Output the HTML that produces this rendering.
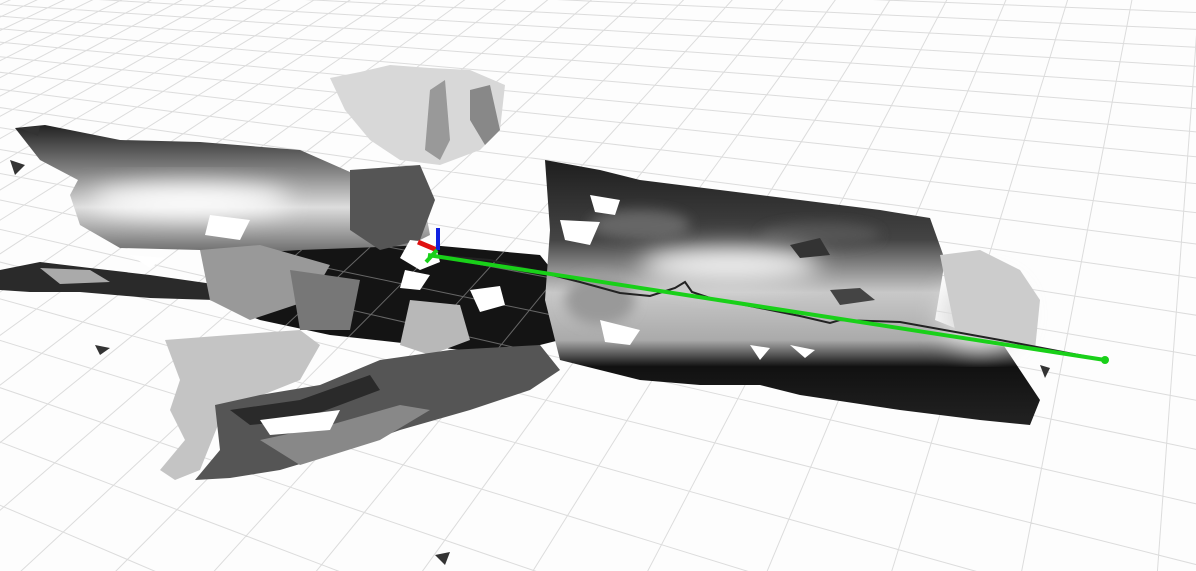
<!DOCTYPE html>
<html><head><meta charset="utf-8"><style>
html,body{margin:0;padding:0;background:#fff;width:1196px;height:571px;overflow:hidden}
svg{display:block}
</style></head><body>
<svg id="s" width="1196" height="571" viewBox="0 0 1196 571" xmlns="http://www.w3.org/2000/svg">
<defs>
<filter id="b"><feGaussianBlur stdDeviation="12"/></filter>
<filter id="b2"><feGaussianBlur stdDeviation="6"/></filter>
<linearGradient id="lu" x1="0" y1="0" x2="0" y2="1">
<stop offset="0" stop-color="#222"/><stop offset="0.35" stop-color="#888"/><stop offset="0.6" stop-color="#ddd"/><stop offset="1" stop-color="#555"/>
</linearGradient>
<linearGradient id="rt" x1="0" y1="0" x2="0" y2="1">
<stop offset="0" stop-color="#1e1e1e"/><stop offset="0.3" stop-color="#444"/><stop offset="0.5" stop-color="#c8c8c8"/><stop offset="0.68" stop-color="#aaa"/><stop offset="0.78" stop-color="#111"/><stop offset="1" stop-color="#222"/>
</linearGradient>
<clipPath id="mc"><polygon points="220,255 300,250 430,245 540,255 560,280 560,340 500,355 420,345 330,335 260,320 210,300"/></clipPath>
<clipPath id="vc"><rect x="0" y="0" width="1196" height="571"/></clipPath>
</defs>
<rect width="1196" height="571" fill="#fdfdfd"/>
<g id="grid" clip-path="url(#vc)" stroke="#dcdcdc" stroke-width="1" fill="none"></g>

<polygon fill="url(#lu)" points="15,128 45,125 120,140 200,142 300,150 350,172 420,180 430,235 400,250 340,262 260,255 200,250 120,248 80,225 70,195 78,180 40,160"/>
<polygon fill="#2a2a2a" points="0,270 40,262 90,268 150,275 220,285 215,300 150,298 80,292 30,292 0,290"/>
<polygon fill="#aaa" points="40,268 90,270 110,282 60,284"/>
<polygon fill="#141414" points="220,255 300,250 430,245 540,255 560,280 560,340 500,355 420,345 330,335 260,320 210,300"/>
<g id="grid2" clip-path="url(#mc)" stroke="#666" stroke-width="1" fill="none"></g>
<polygon fill="#999" points="200,250 260,245 330,265 310,300 250,320 210,300"/>
<polygon fill="#777" points="290,270 360,280 350,330 300,330"/>
<polygon fill="#555" points="350,170 420,165 435,200 420,240 380,250 350,230"/>
<polygon fill="#b8b8b8" points="410,300 460,305 470,340 430,355 400,345"/>
<polygon fill="#c4c4c4" points="165,340 230,335 300,330 320,345 300,380 250,400 220,420 200,470 175,480 160,470 185,440 170,410 180,380"/>
<polygon fill="#555" points="215,405 260,395 320,385 380,360 450,350 540,345 560,370 530,390 470,410 400,430 330,455 280,470 230,478 195,480 220,450"/>
<polygon fill="#2a2a2a" points="230,410 300,400 370,375 380,390 300,420 250,425"/>
<polygon fill="#888" points="260,440 330,425 400,405 430,410 380,440 300,465"/>
<polygon fill="#fff" points="260,420 340,410 330,430 270,435"/>
<polygon fill="url(#rt)" points="545,160 600,170 640,180 720,190 800,200 880,210 930,218 945,260 935,320 960,330 1000,340 1040,400 1030,425 980,420 900,410 800,395 760,385 700,385 640,380 600,370 560,360 545,300 550,230"/>
<g filter="url(#b2)">
<ellipse cx="640" cy="225" rx="50" ry="15" fill="#666"/>
<ellipse cx="820" cy="235" rx="60" ry="12" fill="#555"/>
<ellipse cx="600" cy="300" rx="35" ry="25" fill="#999"/>
</g>
<g filter="url(#b)" fill="#f0f0f0">
<ellipse cx="730" cy="265" rx="90" ry="18"/>
<ellipse cx="190" cy="200" rx="100" ry="16" fill="#fff"/>
<ellipse cx="980" cy="315" rx="40" ry="35" fill="#ddd"/>
</g>
<polygon fill="#ccc" points="940,255 980,250 1020,270 1040,300 1035,350 990,345 955,330"/>
<polygon fill="#333" points="790,245 820,238 830,255 800,258"/>
<polygon fill="#444" points="830,290 860,288 875,300 840,305"/>
<polygon fill="#d8d8d8" points="330,78 360,72 390,65 430,68 470,70 505,85 500,130 480,150 440,165 400,160 370,140 345,110"/>
<polygon fill="#999" points="430,90 445,80 450,140 440,160 425,150"/>
<polygon fill="#888" points="470,90 490,85 500,130 485,145 470,120"/>
<g fill="#fff">
<polygon points="410,240 435,243 440,262 420,270 400,258"/>
<polygon points="405,270 430,275 420,290 400,288"/>
<polygon points="470,290 500,286 505,305 480,312"/>
<polygon points="560,220 600,222 590,245 565,240"/>
<polygon points="590,195 620,200 615,215 595,212"/>
<polygon points="600,320 640,330 630,345 605,342"/>
<polygon points="750,345 770,348 760,360"/>
<polygon points="790,345 815,350 805,358"/>
<polygon points="210,215 250,220 240,240 205,235"/>
<polygon points="130,255 165,258 150,268"/>
</g>
<g fill="#333">
<polygon points="95,345 110,348 100,355"/>
<polygon points="435,555 450,552 445,565"/>
<polygon points="10,160 25,165 15,175"/>
<polygon points="1040,365 1050,368 1045,378"/>
<polygon points="20,128 40,126 38,136"/>
</g>
<path d="M430,255 L490,260 540,272 580,282 620,293 650,296 675,288 685,282 692,292 710,298 760,308 800,316 830,323 840,320 900,322 1000,340 1105,360" stroke="#222" stroke-width="2" fill="none"/>
<line x1="428" y1="255" x2="1105" y2="360" stroke="#19d019" stroke-width="4"/>
<circle cx="1105" cy="360" r="4" fill="#19d019"/>
<line x1="437" y1="250" x2="418" y2="242" stroke="#e01010" stroke-width="5"/>
<line x1="438" y1="250" x2="438" y2="228" stroke="#1020e0" stroke-width="4"/>
<line x1="437" y1="250" x2="426" y2="262" stroke="#19d019" stroke-width="4"/>
</svg>
<script>
(function(){
var V1=[-1400,-92],V2=[1240,-560],O=[430,255],a=0.032,b=0.034;
function P(u,v){var d=a*u+b*v+1;if(d<0.03)return null;var x=(a*u*V1[0]+b*v*V2[0]+O[0])/d,y=(a*u*V1[1]+b*v*V2[1]+O[1])/d;return [x,y];}
var d='';
function line(f){var s='',st=false;for(var t=-200;t<=200;t+=1){var p=f(t);if(!p||p[0]<-300||p[0]>1500||p[1]<-300||p[1]>900){st=false;continue;}s+=(st?'L':'M')+p[0].toFixed(1)+' '+p[1].toFixed(1);st=true;}return s;}
for(var i=-80;i<=80;i++){d+=line(function(t){return P(i,t);});d+=line(function(t){return P(t,i);});}
['grid','grid2'].forEach(function(id){var p=document.createElementNS('http://www.w3.org/2000/svg','path');p.setAttribute('d',d);document.getElementById(id).appendChild(p);});
})();
</script>
</body></html>
